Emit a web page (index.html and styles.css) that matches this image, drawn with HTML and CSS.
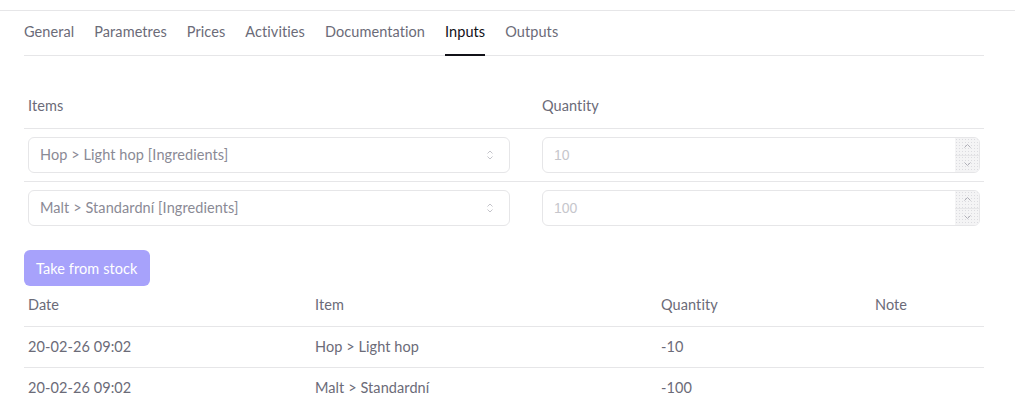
FILE: index.html
```html
<!DOCTYPE html>
<html lang="en">
<head>
    <meta charset="UTF-8">
    <title>Inputs</title>
    <link rel="stylesheet" href="styles.css">
</head>
<body>
    <div class="page">
        <div class="content">
            <ul class="tabs">
                <li class="tab">General</li>
                <li class="tab">Parametres</li>
                <li class="tab">Prices</li>
                <li class="tab">Activities</li>
                <li class="tab">Documentation</li>
                <li class="tab active">Inputs</li>
                <li class="tab">Outputs</li>
            </ul>

            <div class="form-table">
                <div class="form-head">Items</div>
                <div class="form-head">Quantity</div>

                <div class="form-cell row-line">
                    <div class="select">
                        <span>Hop &gt; Light hop [Ingredients]</span>
                        <svg class="updown" width="8" height="12" viewBox="0 0 8 12"><path d="M1.5 4.5 L4 2 L6.5 4.5 M1.5 7.5 L4 10 L6.5 7.5" fill="none" stroke="#c4c4ca" stroke-width="1"/></svg>
                    </div>
                </div>
                <div class="form-cell row-line">
                    <div class="number">
                        <span>10</span>
                        <div class="spin">
                            <div class="spin-btn">
                                <svg width="9" height="6" viewBox="0 0 9 6"><path d="M1.5 4.5 L4.5 1.5 L7.5 4.5" fill="none" stroke="#b0b0b8" stroke-width="1"/></svg>
                            </div>
                            <div class="spin-btn">
                                <svg width="9" height="6" viewBox="0 0 9 6"><path d="M1.5 1.5 L4.5 4.5 L7.5 1.5" fill="none" stroke="#b0b0b8" stroke-width="1"/></svg>
                            </div>
                        </div>
                    </div>
                </div>

                <div class="form-cell">
                    <div class="select">
                        <span>Malt &gt; Standardní [Ingredients]</span>
                        <svg class="updown" width="8" height="12" viewBox="0 0 8 12"><path d="M1.5 4.5 L4 2 L6.5 4.5 M1.5 7.5 L4 10 L6.5 7.5" fill="none" stroke="#c4c4ca" stroke-width="1"/></svg>
                    </div>
                </div>
                <div class="form-cell">
                    <div class="number">
                        <span>100</span>
                        <div class="spin">
                            <div class="spin-btn">
                                <svg width="9" height="6" viewBox="0 0 9 6"><path d="M1.5 4.5 L4.5 1.5 L7.5 4.5" fill="none" stroke="#b0b0b8" stroke-width="1"/></svg>
                            </div>
                            <div class="spin-btn">
                                <svg width="9" height="6" viewBox="0 0 9 6"><path d="M1.5 1.5 L4.5 4.5 L7.5 1.5" fill="none" stroke="#b0b0b8" stroke-width="1"/></svg>
                            </div>
                        </div>
                    </div>
                </div>
            </div>

            <button class="take-btn">Take from stock</button>

            <div class="log">
                <div class="log-head">Date</div>
                <div class="log-head">Item</div>
                <div class="log-head">Quantity</div>
                <div class="log-head">Note</div>

                <div class="log-cell">20-02-26 09:02</div>
                <div class="log-cell">Hop &gt; Light hop</div>
                <div class="log-cell">-10</div>
                <div class="log-cell"></div>

                <div class="log-cell">20-02-26 09:02</div>
                <div class="log-cell">Malt &gt; Standardní</div>
                <div class="log-cell">-100</div>
                <div class="log-cell"></div>
            </div>
        </div>
    </div>
</body>
</html>
```

FILE: styles.css
```css
body {
    margin: 0;
    font-family: "Lato", "Noto Sans", sans-serif;
    font-size: 14.5px;
    letter-spacing: 0.08px;
    line-height: 20px;
    color: #6b6b78;
    background: #fff;
}
.page {
    margin-top: 10px;
    border-top: 1px solid #e6e6e8;
}
.content {
    padding: 0 31px 0 24px;
}

/* tabs */
.tabs {
    display: flex;
    gap: 20px;
    margin: 0;
    padding: 0;
    list-style: none;
    border-bottom: 1px solid #e6e6e8;
}
.tab {
    padding: 11px 0 12px;
    border-bottom: 2px solid transparent;
    margin-bottom: -1px;
    color: #6b6b78;
}
.tab.active {
    color: #111118;
    border-bottom-color: #111118;
}

/* inputs form */
.form-table {
    display: grid;
    grid-template-columns: 514px 1fr;
    margin-top: 32px;
}
.form-head {
    padding: 8px 4px 12px;
    border-bottom: 1px solid #e6e6e8;
    color: #6b6b78;
}
.form-cell {
    padding: 8px 4px;
}
.row-line {
    border-bottom: 1px solid #e6e6e8;
}
.select {
    width: 482px;
    height: 36px;
    box-sizing: border-box;
    border: 1px solid #e6e6e8;
    border-radius: 6px;
    display: flex;
    align-items: center;
    justify-content: space-between;
    padding: 0 15px 0 11px;
    color: #8a8a95;
}
.number {
    height: 36px;
    box-sizing: border-box;
    border: 1px solid #e6e6e8;
    border-radius: 6px;
    display: flex;
    align-items: center;
    justify-content: space-between;
    padding-left: 11px;
    color: #c6c6cc;
    font-family: "Liberation Sans", sans-serif;
    font-size: 14px;
    letter-spacing: 0;
    overflow: hidden;
}
.spin {
    width: 24px;
    height: 100%;
    display: flex;
    flex-direction: column;
    background-color: #f4f4f5;
    background-image: radial-gradient(#dcdce0 0.6px, transparent 0.8px);
    background-size: 3px 3px;
}
.spin-btn {
    flex: 1;
    display: flex;
    align-items: center;
    justify-content: center;
}
.spin-btn + .spin-btn {
    border-top: 1px solid #e6e6e8;
}

.take-btn {
    display: block;
    margin-top: 16px;
    height: 36px;
    padding: 0 12px;
    border: none;
    border-radius: 6px;
    background: #a7a2fb;
    color: #fff;
    font-family: inherit;
    font-size: 14.5px;
    letter-spacing: 0.08px;
}

/* stock log */
.log {
    display: grid;
    grid-template-columns: 287px 346px 214px 1fr;
}
.log-head {
    padding: 9px 4px 11px;
    border-bottom: 1px solid #e6e6e8;
}
.log-cell {
    padding: 10px 4px;
    border-bottom: 1px solid #e6e6e8;
}
.log-cell:nth-last-child(-n+4) {
    border-bottom: none;
}
```
